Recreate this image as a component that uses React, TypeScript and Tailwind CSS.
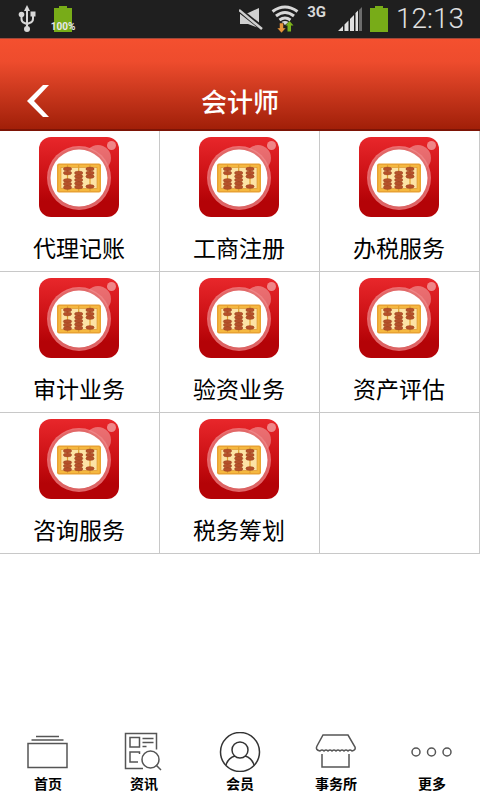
import type { ReactNode } from "react";

const services = [
  "代理记账",
  "工商注册",
  "办税服务",
  "审计业务",
  "验资业务",
  "资产评估",
  "咨询服务",
  "税务筹划",
  "",
];

const beads = [
  { x: 28.5, ys: [32, 36, 43.5, 47, 50.5] },
  { x: 39.7, ys: [36, 39.5, 43, 46.5, 50] },
  { x: 51, ys: [32, 36, 39.5, 49.5] },
];

const AbacusIcon = () => (
  <svg className="size-20" viewBox="0 0 80 80" aria-hidden="true">
    <defs>
      <linearGradient id="tile" x1="0" y1="0" x2="0" y2="1">
        <stop offset="0" stopColor="#e8272b" />
        <stop offset="0.5" stopColor="#cb1014" />
        <stop offset="0.8" stopColor="#b40307" />
      </linearGradient>
    </defs>
    <rect width="80" height="80" rx="12" fill="url(#tile)" />
    <circle cx="59" cy="21" r="13" fill="#fff" opacity="0.35" />
    <circle cx="72.500" cy="8.500" r="4.500" fill="#fff" opacity="0.45" />
    <circle cx="40" cy="41" r="32" fill="#f08a8c" opacity="0.75" />
    <circle cx="40" cy="41" r="30.500" fill="#d8605c" opacity="0.5" />
    <circle cx="40" cy="41" r="28.500" fill="#fff" />
    <rect x="18" y="26.500" width="44" height="29" rx="2" fill="#e9a233" />
    <rect x="19.500" y="28" width="41" height="26" rx="1" fill="#f5b840" />
    <rect x="22" y="30.500" width="36" height="21" fill="#fce3a6" stroke="#d98f2b" strokeWidth="0.6" />
    {beads.map(({ x, ys }) => (
      <g key={x}>
        <path d={`M${x} 28v26`} stroke="#dfa030" strokeWidth="1.200" />
        {ys.map((y) => (
          <ellipse key={y} cx={x} cy={y} rx="4.200" ry="1.900" fill="#b5502a" stroke="#963f1c" strokeWidth="0.4" />
        ))}
      </g>
    ))}
  </svg>
);

const UsbIcon = () => (
  <svg className="h-7 w-[18px]" viewBox="0 0 18 28" fill="none" stroke="#d8d8d8" strokeWidth="2" aria-hidden="true">
    <path d="M9 4v20M3.500 10v4q0 3 3 4l2.500 1M15 9v5q0 3-3.500 4L9 19" />
    <path d="M9 0l3 6H6z" fill="#d8d8d8" stroke="none" />
    <circle cx="3.500" cy="9.500" r="2.800" fill="#d8d8d8" stroke="none" />
    <path d="M12.500 6.500H17.500v5h-5z" fill="#d8d8d8" stroke="none" />
    <circle cx="9" cy="24" r="3" fill="#d8d8d8" stroke="none" />
  </svg>
);

const BatteryIcon = () => (
  <svg className="h-[26px] w-[18px]" viewBox="0 0 18 26" aria-hidden="true">
    <path d="M5 0h8v2h5v24H0V2h5z" fill="#78ac18" />
  </svg>
);

const MuteIcon = () => (
  <svg className="h-6 w-6" viewBox="0 0 24 24" aria-hidden="true">
    <path d="M1 6h8L20 1v20L9 17H1z" fill="#d0d0d0" />
    <path d="M-1 2l25 20" stroke="#1f1f1f" strokeWidth="5" />
    <path d="M0 3l23 19" stroke="#d0d0d0" strokeWidth="2.500" />
  </svg>
);

const WifiIcon = () => (
  <svg className="h-7 w-7" viewBox="0 0 28 28" fill="none" stroke="#d8d8d8" strokeWidth="3" aria-hidden="true">
    <path d="M1.500 6.500q12.500-9 25 0M5 11q9-7 18 0M8.500 15q5.500-4 11 0" />
    <path d="M10.500 17q3.500-2 7 0L14 20z" fill="#d8d8d8" stroke="none" />
    <path d="M8.500 18h4v5H15L10.500 28 6 23h2.500z" fill="#e8943a" stroke="#1f1f1f" strokeWidth="0.5" />
    <path d="M18.500 16l4 4.500h-2.500v6h-3.500v-6h-2z" fill="#7cb31c" stroke="none" />
  </svg>
);

const SignalIcon = () => (
  <svg className="h-6 w-6" viewBox="0 0 24 24" fill="#e0e0e0" aria-hidden="true">
    <path d="M0 24l5-5v5zM6.500 17.500l4-4v10.500h-4zM12 12l4-4v16h-4zM17.500 6l2.500-2.500v20.500h-2.500z" />
    <path d="M21 3l3-3v24h-3z" fill="#6c6c6c" />
  </svg>
);

const NavIcon = ({ children }: { children: ReactNode }) => (
  <svg
    className="h-10 w-[42px]"
    viewBox="0 0 42 40"
    fill="none"
    stroke="#555"
    strokeWidth="1.5"
    aria-hidden="true"
  >
    {children}
  </svg>
);

const navItems = [
  {
    label: "首页",
    icon: <path d="M1 11.500h39v24H1zM4.500 8h32M9 4.500h23" />,
  },
  {
    label: "资讯",
    icon: (
      <>
        <path d="M20 36.500H2.500V1.500h31v16M7 5.500h9.500v9.500H7zM19.500 6.500h11M19.500 10.500h11M19.500 14.500h4M15 30H7V20h9.500v2M33 33l5 5" />
        <circle cx="27.500" cy="27.500" r="8.500" />
      </>
    ),
  },
  {
    label: "会员",
    icon: (
      <>
        <circle cx="21" cy="20" r="19.500" stroke="#333" />
        <circle cx="21" cy="18" r="8" stroke="#333" />
        <path d="M7 33q2-7 9-9M35 33q-2-7-9-9" stroke="#333" />
      </>
    ),
  },
  {
    label: "事务所",
    icon: (
      <path d="M8 3h25l7 12q1 3-3 4-2-2-4 0-2-2-4 0-2-2-4 0-2-2-4 0-2-2-4 0-2-2-4 0-2-2-4 0-2-2-4 0-5-1-3-5zM7 22v13h27V22" />
    ),
  },
  {
    label: "更多",
    icon: (
      <>
        <circle cx="5" cy="20" r="4" />
        <circle cx="20.500" cy="20" r="4" />
        <circle cx="36" cy="20" r="4" />
      </>
    ),
  },
];

const StatusBar = () => (
  <div className="flex h-[38px] items-center justify-between bg-[#1f1f1f] pr-4 pl-[18px]">
    <div className="flex items-center gap-[18px]">
      <UsbIcon />
      <div className="relative">
        <BatteryIcon />
        <span className="absolute inset-x-[-6px] bottom-0 text-center font-['Roboto'] text-[10px] leading-[10px] font-bold text-[#e8e8e8]">
          100%
        </span>
      </div>
    </div>
    <div className="flex items-center gap-2">
      <MuteIcon />
      <WifiIcon />
      <span className="h-7 pr-1 font-['Roboto'] text-[15px] leading-[14px] font-bold text-[#d8d8d8]">3G</span>
      <SignalIcon />
      <BatteryIcon />
      <span className="font-['Roboto'] text-[28px] leading-8 font-light text-[#e0e0e0]">12:13</span>
    </div>
  </div>
);

const App = () => {
  return (
    <div className="flex min-h-screen flex-col bg-white font-['Noto_Sans_CJK_SC',sans-serif] text-black">
      <StatusBar />
      <header className="grid h-[93px] grid-cols-[80px_1fr_80px] items-center border-t border-b-2 border-t-[#a0483a] border-b-[#7d1406] bg-linear-to-b from-[#f4502f] via-[#ee4c2d] via-25% to-[#a11f08] pt-[34px]">
        <button type="button" aria-label="返回" className="flex h-12 items-center pl-[27px]">
          <svg className="h-8 w-[22px]" viewBox="0 0 22 32" fill="#fff" aria-hidden="true">
            <path d="M16 0h6L7 16l15 16h-6L0 16z" />
          </svg>
        </button>
        <h1 className="text-center text-[26px] leading-9 font-medium text-white">会计师</h1>
      </header>
      <main className="grid grid-cols-3">
        {services.map((name) => (
          <div key={name} className="h-[141px] border-r border-b border-[#c8c8c8]">
            {name && (
              <button type="button" className="flex w-full flex-col items-center gap-[10px] pt-[6px] pr-px">
                <AbacusIcon />
                <span className="text-[23px] leading-10">{name}</span>
              </button>
            )}
          </div>
        ))}
      </main>
      <nav className="mt-auto grid grid-cols-5 pb-[7px]">
        {navItems.map(({ label, icon }) => (
          <button key={label} type="button" className="flex flex-col items-center gap-px">
            <NavIcon>{icon}</NavIcon>
            <span className="text-sm leading-5 font-bold">{label}</span>
          </button>
        ))}
      </nav>
    </div>
  );
};

export default App;
